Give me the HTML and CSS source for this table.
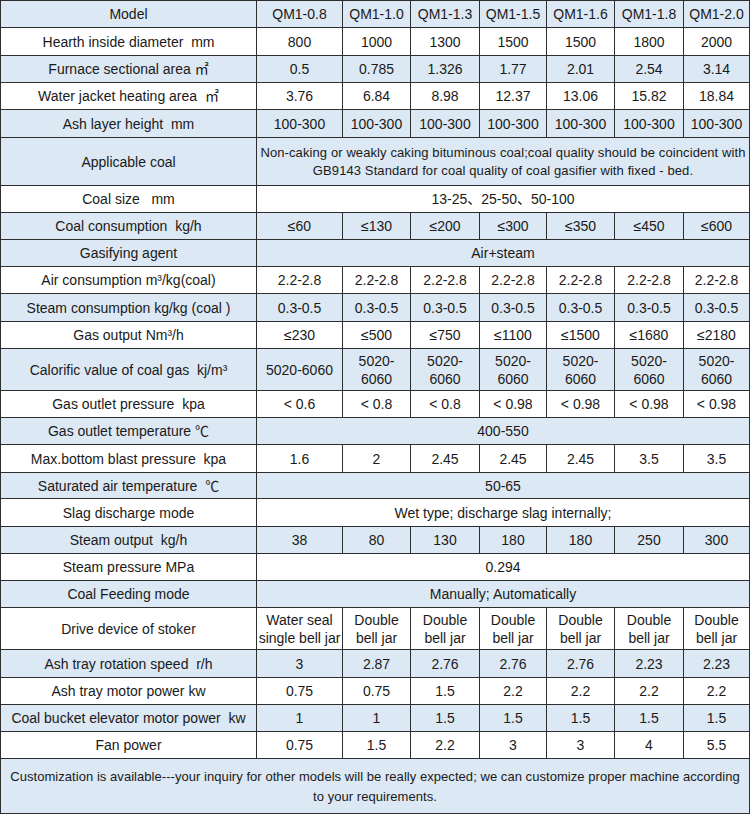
FILE: index.html
```html
<!DOCTYPE html>
<html>
<head>
<meta charset="utf-8">
<link rel="stylesheet" href="styles.css">
</head>
<body>
<table class="spec">
<colgroup>
<col class="c-label"><col class="c1"><col class="c2"><col class="c3"><col class="c4"><col class="c5"><col class="c6"><col class="c7">
</colgroup>
<tbody>
<tr class="b h27"><td>Model</td><td>QM1-0.8</td><td>QM1-1.0</td><td>QM1-1.3</td><td>QM1-1.5</td><td>QM1-1.6</td><td>QM1-1.8</td><td>QM1-2.0</td></tr>
<tr class="w h28"><td>Hearth inside diameter&nbsp; mm</td><td>800</td><td>1000</td><td>1300</td><td>1500</td><td>1500</td><td>1800</td><td>2000</td></tr>
<tr class="b h27"><td>Furnace sectional area ㎡</td><td>0.5</td><td>0.785</td><td>1.326</td><td>1.77</td><td>2.01</td><td>2.54</td><td>3.14</td></tr>
<tr class="w h27"><td>Water jacket heating area&nbsp; ㎡</td><td>3.76</td><td>6.84</td><td>8.98</td><td>12.37</td><td>13.06</td><td>15.82</td><td>18.84</td></tr>
<tr class="b h28"><td>Ash layer height&nbsp; mm</td><td>100-300</td><td>100-300</td><td>100-300</td><td>100-300</td><td>100-300</td><td>100-300</td><td>100-300</td></tr>
<tr class="b h48"><td>Applicable coal</td><td colspan="7" class="long">Non-caking or weakly caking bituminous coal;coal quality should be coincident with<br>GB9143 Standard for coal quality of coal gasifier with fixed - bed.</td></tr>
<tr class="w h27"><td>Coal size&nbsp;&nbsp; mm</td><td colspan="7">13-25、25-50、50-100</td></tr>
<tr class="b h27"><td>Coal consumption&nbsp; kg/h</td><td>≤60</td><td>≤130</td><td>≤200</td><td>≤300</td><td>≤350</td><td>≤450</td><td>≤600</td></tr>
<tr class="b h27"><td>Gasifying agent</td><td colspan="7">Air+steam</td></tr>
<tr class="w h27"><td>Air consumption m³/kg(coal)</td><td>2.2-2.8</td><td>2.2-2.8</td><td>2.2-2.8</td><td>2.2-2.8</td><td>2.2-2.8</td><td>2.2-2.8</td><td>2.2-2.8</td></tr>
<tr class="b h28"><td>Steam consumption kg/kg (coal )</td><td>0.3-0.5</td><td>0.3-0.5</td><td>0.3-0.5</td><td>0.3-0.5</td><td>0.3-0.5</td><td>0.3-0.5</td><td>0.3-0.5</td></tr>
<tr class="w h27"><td>Gas output Nm³/h</td><td>≤230</td><td>≤500</td><td>≤750</td><td>≤1100</td><td>≤1500</td><td>≤1680</td><td>≤2180</td></tr>
<tr class="b h42"><td>Calorific value of coal gas&nbsp; kj/m³</td><td>5020-6060</td><td>5020-<br>6060</td><td>5020-<br>6060</td><td>5020-<br>6060</td><td>5020-<br>6060</td><td>5020-<br>6060</td><td>5020-<br>6060</td></tr>
<tr class="w h27"><td>Gas outlet pressure&nbsp; kpa</td><td>&lt; 0.6</td><td>&lt; 0.8</td><td>&lt; 0.8</td><td>&lt; 0.98</td><td>&lt; 0.98</td><td>&lt; 0.98</td><td>&lt; 0.98</td></tr>
<tr class="b h27"><td>Gas outlet temperature ℃</td><td colspan="7">400-550</td></tr>
<tr class="w h28"><td>Max.bottom blast pressure&nbsp; kpa</td><td>1.6</td><td>2</td><td>2.45</td><td>2.45</td><td>2.45</td><td>3.5</td><td>3.5</td></tr>
<tr class="b h26"><td>Saturated air temperature&nbsp; ℃</td><td colspan="7">50-65</td></tr>
<tr class="w h28"><td>Slag discharge mode</td><td colspan="7">Wet type; discharge slag internally;</td></tr>
<tr class="b h27"><td>Steam output&nbsp; kg/h</td><td>38</td><td>80</td><td>130</td><td>180</td><td>180</td><td>250</td><td>300</td></tr>
<tr class="w h27"><td>Steam pressure MPa</td><td colspan="7">0.294</td></tr>
<tr class="b h27"><td>Coal Feeding mode</td><td colspan="7">Manually; Automatically</td></tr>
<tr class="w h42"><td>Drive device of stoker</td><td class="nowrap">Water seal<br>single bell jar</td><td>Double<br>bell jar</td><td>Double<br>bell jar</td><td>Double<br>bell jar</td><td>Double<br>bell jar</td><td>Double<br>bell jar</td><td>Double<br>bell jar</td></tr>
<tr class="b h28"><td>Ash tray rotation speed&nbsp; r/h</td><td>3</td><td>2.87</td><td>2.76</td><td>2.76</td><td>2.76</td><td>2.23</td><td>2.23</td></tr>
<tr class="w h27"><td>Ash tray motor power kw</td><td>0.75</td><td>0.75</td><td>1.5</td><td>2.2</td><td>2.2</td><td>2.2</td><td>2.2</td></tr>
<tr class="b h27"><td class="nowrap">Coal bucket elevator motor power&nbsp; kw</td><td>1</td><td>1</td><td>1.5</td><td>1.5</td><td>1.5</td><td>1.5</td><td>1.5</td></tr>
<tr class="w h27"><td>Fan power</td><td>0.75</td><td>1.5</td><td>2.2</td><td>3</td><td>3</td><td>4</td><td>5.5</td></tr>
<tr class="b h55"><td colspan="8" class="note">Customization is available---your inquiry for other models will be really expected; we can customize proper machine according to your requirements.</td></tr>
</tbody>
</table>
</body>
</html>
```
FILE: styles.css
```css
html, body {
  margin: 0;
  padding: 0;
  background: #ffffff;
}

.spec {
  border-collapse: collapse;
  table-layout: fixed;
  width: 750px;
  font-family: "Liberation Sans", Arial, "Noto Sans CJK SC", sans-serif;
  font-size: 14px;
  color: #1a1a1a;
  line-height: 18px;
}

.c-label { width: 256px; }
.c1 { width: 86px; }
.c2 { width: 68px; }
.c3 { width: 69px; }
.c4 { width: 67px; }
.c5 { width: 68px; }
.c6 { width: 69px; }
.c7 { width: 66px; }

.spec td {
  border: 1px solid #2e2e2e;
  text-align: center;
  vertical-align: middle;
  padding: 0;
  overflow: visible;
}

.b { background: #dce8f4; }
.w { background: #ffffff; }

.h26 { height: 26px; }
.h27 { height: 27px; }
.h28 { height: 28px; }
.h42 { height: 42px; }
.h48 { height: 48px; }
.h55 { height: 55px; }

.nowrap { white-space: nowrap; }

.spec td.long {
  font-size: 13px;
  letter-spacing: 0.1px;
  line-height: 18px;
  white-space: nowrap;
}

.spec td.note {
  font-size: 13px;
  letter-spacing: 0.05px;
  padding: 2px 4px 0;
  line-height: 20px;
}
```
